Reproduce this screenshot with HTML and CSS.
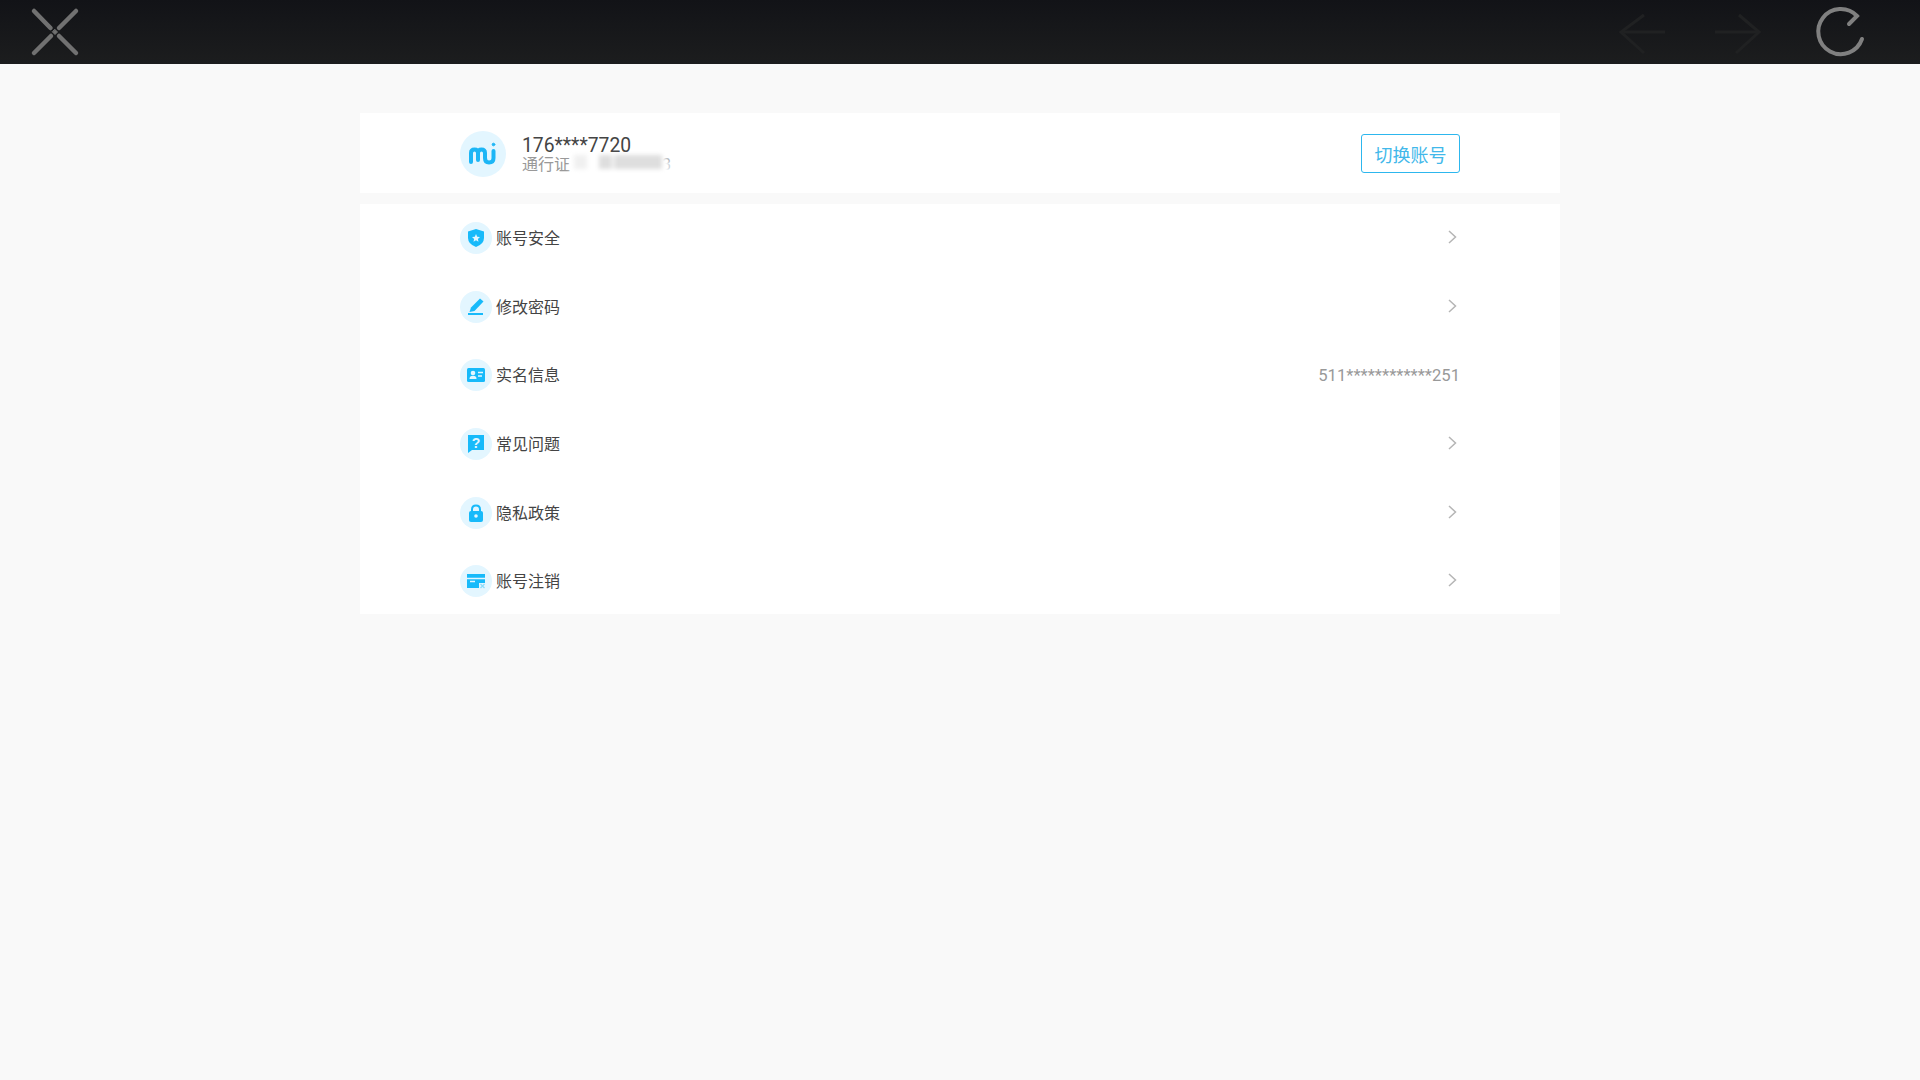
FILE: index.html
```html
<!DOCTYPE html>
<html lang="zh-CN">
<head>
<meta charset="UTF-8" />
<title>账号</title>
<link rel="stylesheet" href="styles.css">
</head>
<body>
<header class="topbar">
  <svg class="tool-close" width="54" height="54" viewBox="0 0 54 54" fill="none" stroke="#717171" stroke-width="4.500" stroke-linecap="round">
    <path d="M6 6 L22.500 23" />
    <path d="M48 6 L31 23" />
    <path d="M6 48 L23 31" />
    <path d="M48 48 L31 31" />
    <path d="M27 24.500 L29.500 27 L27 29.500 L24.500 27 Z" fill="#717171" stroke-width="1" />
  </svg>
  <div class="tools-right">
    <svg width="50" height="54" viewBox="0 0 50 54" fill="none" stroke="#202122" stroke-width="3">
      <path d="M4 27 H48" />
      <path d="M27 10 L4 27 L27 48" />
    </svg>
    <svg width="50" height="54" viewBox="0 0 50 54" fill="none" stroke="#202122" stroke-width="3">
      <path d="M2 27 H46" />
      <path d="M26 10 L46 27 L23 48" />
    </svg>
    <svg class="tool-reload" width="54" height="54" viewBox="0 0 54 54" fill="none" stroke="#808080" stroke-width="4" stroke-linecap="round">
      <path d="M49 34 A22.500 22.500 0 1 1 44 11 L36 19" />
    </svg>
  </div>
</header>

<main class="content">
  <section class="card account">
    <div class="avatar">
      <svg width="30" height="24" viewBox="0 0 30 24" fill="none" stroke="#1cb6f6" stroke-width="4" stroke-linecap="round">
        <path d="M3 20 V11 Q3 7.500 6.500 7.500 Q10 7.500 10 11 V18" />
        <path d="M10 11 Q10 7.500 13.500 7.500 Q17 7.500 17 11 V16 Q17 20.500 21 20.500 Q25.500 20.500 25.500 16 V9" />
        <circle cx="25.500" cy="2.500" r="1.300" fill="#1cb6f6" stroke-width="1" />
      </svg>
    </div>
    <div class="account-text">
      <div class="phone">176****7720</div>
      <div class="passport">通行证<span class="masked-gap"></span>3
        <div class="mosaic">
          <i class="faint"></i><i></i><i class="wide"></i>
        </div>
      </div>
    </div>
    <button type="button" class="btn-switch">切换账号</button>
  </section>

  <section class="card menu">
    <div class="menu-row">
      <span class="menu-icon">
        <svg width="20" height="20" viewBox="0 0 20 20"><path d="M10 1 L18 3.500 V10 Q18 16 10 19 Q2 16 2 10 V3.500 Z" fill="#17bafa" /><path d="M10 6 L11.200 8.700 L14 9 L11.900 10.900 L12.500 13.700 L10 12.300 L7.500 13.700 L8.100 10.900 L6 9 L8.800 8.700 Z" fill="#e3f6ff" /></svg>
      </span>
      <span class="menu-label">账号安全</span>
      <svg class="chevron" width="9" height="14" viewBox="0 0 9 14" fill="none" stroke="#b5b5b5" stroke-width="1.500"><path d="M1 1 L7.500 7 L1 13" /></svg>
    </div>
    <div class="menu-row">
      <span class="menu-icon">
        <svg width="20" height="20" viewBox="0 0 20 20" fill="#17bafa"><path d="M14 1.500 L17.500 4.500 L8.500 14 L3.500 15 L5 10.500 Z" /><rect x="2" y="16" width="15" height="2" /></svg>
      </span>
      <span class="menu-label">修改密码</span>
      <svg class="chevron" width="9" height="14" viewBox="0 0 9 14" fill="none" stroke="#b5b5b5" stroke-width="1.500"><path d="M1 1 L7.500 7 L1 13" /></svg>
    </div>
    <div class="menu-row">
      <span class="menu-icon">
        <svg width="20" height="20" viewBox="0 0 20 20"><rect x="1" y="3" width="18" height="14" rx="1.500" fill="#17bafa" /><circle cx="7" cy="8" r="2.300" fill="#e3f6ff" /><path d="M3.500 14 Q3.500 10.800 7 10.800 Q10.500 10.800 10.500 14 Z" fill="#e3f6ff" /><path d="M12 7.500 H17 M12 11 H16" stroke="#e3f6ff" stroke-width="1.500" /></svg>
      </span>
      <span class="menu-label">实名信息</span>
      <span class="menu-value">511************251</span>
    </div>
    <div class="menu-row">
      <span class="menu-icon">
        <svg width="20" height="20" viewBox="0 0 20 20"><path d="M2 1 H18 V16 H6 L2 19 Z" fill="#17bafa" /><text x="10" y="13.500" class="icon-mark">?</text></svg>
      </span>
      <span class="menu-label">常见问题</span>
      <svg class="chevron" width="9" height="14" viewBox="0 0 9 14" fill="none" stroke="#b5b5b5" stroke-width="1.500"><path d="M1 1 L7.500 7 L1 13" /></svg>
    </div>
    <div class="menu-row">
      <span class="menu-icon">
        <svg width="20" height="20" viewBox="0 0 20 20"><path d="M6 9 V6.500 Q6 2.500 10 2.500 Q14 2.500 14 6.500 V9" fill="none" stroke="#17bafa" stroke-width="2" /><rect x="3" y="8" width="14" height="11" rx="2" fill="#17bafa" /><circle cx="10" cy="13" r="1.800" fill="#e3f6ff" /></svg>
      </span>
      <span class="menu-label">隐私政策</span>
      <svg class="chevron" width="9" height="14" viewBox="0 0 9 14" fill="none" stroke="#b5b5b5" stroke-width="1.500"><path d="M1 1 L7.500 7 L1 13" /></svg>
    </div>
    <div class="menu-row">
      <span class="menu-icon">
        <svg width="20" height="20" viewBox="0 0 20 20"><path d="M1 3 H19 V12 H13 V17 H1 Z" fill="#17bafa" /><path d="M1 7.500 H19 M4 10.500 H9" stroke="#e3f6ff" stroke-width="1.300" /><path d="M14.500 13 L18.500 17 M18.500 13 L14.500 17" stroke="#8adcfc" stroke-width="1.300" /></svg>
      </span>
      <span class="menu-label">账号注销</span>
      <svg class="chevron" width="9" height="14" viewBox="0 0 9 14" fill="none" stroke="#b5b5b5" stroke-width="1.500"><path d="M1 1 L7.500 7 L1 13" /></svg>
    </div>
  </section>
</main>
</body>
</html>
```

FILE: styles.css
```css
/* --- BASE --- */
*, *::before, *::after {
  box-sizing: border-box;
}
body {
  margin: 0;
  min-height: 100vh;
  background: #f9f9f9;
  font-family: Roboto, "Noto Sans CJK SC", sans-serif;
  color: #333;
  overflow: hidden;
}

/* --- TOP BAR --- */
.topbar {
  height: 64px;
  background: linear-gradient(180deg, #121317, #1c1d1e);
  display: flex;
  justify-content: space-between;
  align-items: center;
  padding: 0 53px 0 28px;
}
.tools-right {
  display: flex;
  align-items: center;
  gap: 46px;
}
.tool-reload {
  margin-left: 4px;
}

/* --- CONTENT --- */
.content {
  width: 1200px;
  margin: 49px auto 0;
  display: flex;
  flex-direction: column;
  gap: 11px;
}
.card {
  background: #fff;
  padding: 0 100px;
}

/* --- ACCOUNT CARD --- */
.account {
  height: 80px;
  padding-top: 2px;
  display: flex;
  align-items: center;
}
.avatar {
  width: 46px;
  height: 46px;
  border-radius: 50%;
  background: #e3f6ff;
  display: flex;
  align-items: center;
  justify-content: center;
}
.account-text {
  margin: 2px 0 0 16px;
  flex: 1;
}
.phone {
  font-size: 19.300px;
  line-height: 20px;
  color: #444;
}
.passport {
  position: relative;
  display: flex;
  width: 160px;
  font-size: 16px;
  line-height: 18px;
  color: #999;
}
.masked-gap {
  width: 92px;
}
.mosaic {
  position: absolute;
  left: 48px;
  top: -1px;
  width: 100px;
  height: 25px;
  background: #fff;
  border-radius: 12px;
  display: flex;
  align-items: flex-start;
  gap: 12px;
  padding: 0 8px 0 4px;
  filter: blur(2px);
}
.mosaic i {
  width: 13px;
  height: 14px;
  background: #dedede;
}
.mosaic .faint {
  background: #f0f0f0;
}
.mosaic .wide {
  flex: 1;
  margin-left: -10px;
}
.btn-switch {
  width: 99px;
  height: 39px;
  padding: 1px 0 0;
  margin-top: -1px;
  background: #fff;
  border: 1px solid #2db7ee;
  border-radius: 3px;
  color: #41b8ea;
  font-family: inherit;
  font-size: 18px;
}

/* --- MENU --- */
.menu {
  height: 410px;
  display: flex;
  flex-direction: column;
}
.menu-row {
  flex: none;
  height: 68.600px;
  display: flex;
  align-items: center;
}
.menu-icon {
  width: 32px;
  height: 32px;
  border-radius: 50%;
  background: #e3f6ff;
  display: flex;
  align-items: center;
  justify-content: center;
}
.menu-label {
  margin: -2px 0 0 4px;
  flex: 1;
  font-size: 16px;
  color: #444;
}
.menu-value {
  font-size: 16.600px;
  color: #999;
}
.chevron {
  margin-right: 3px;
  margin-top: -2px;
}
.icon-mark {
  fill: #e3f6ff;
  font-family: "Liberation Sans", sans-serif;
  font-size: 14px;
  font-weight: 700;
  text-anchor: middle;
}
```
